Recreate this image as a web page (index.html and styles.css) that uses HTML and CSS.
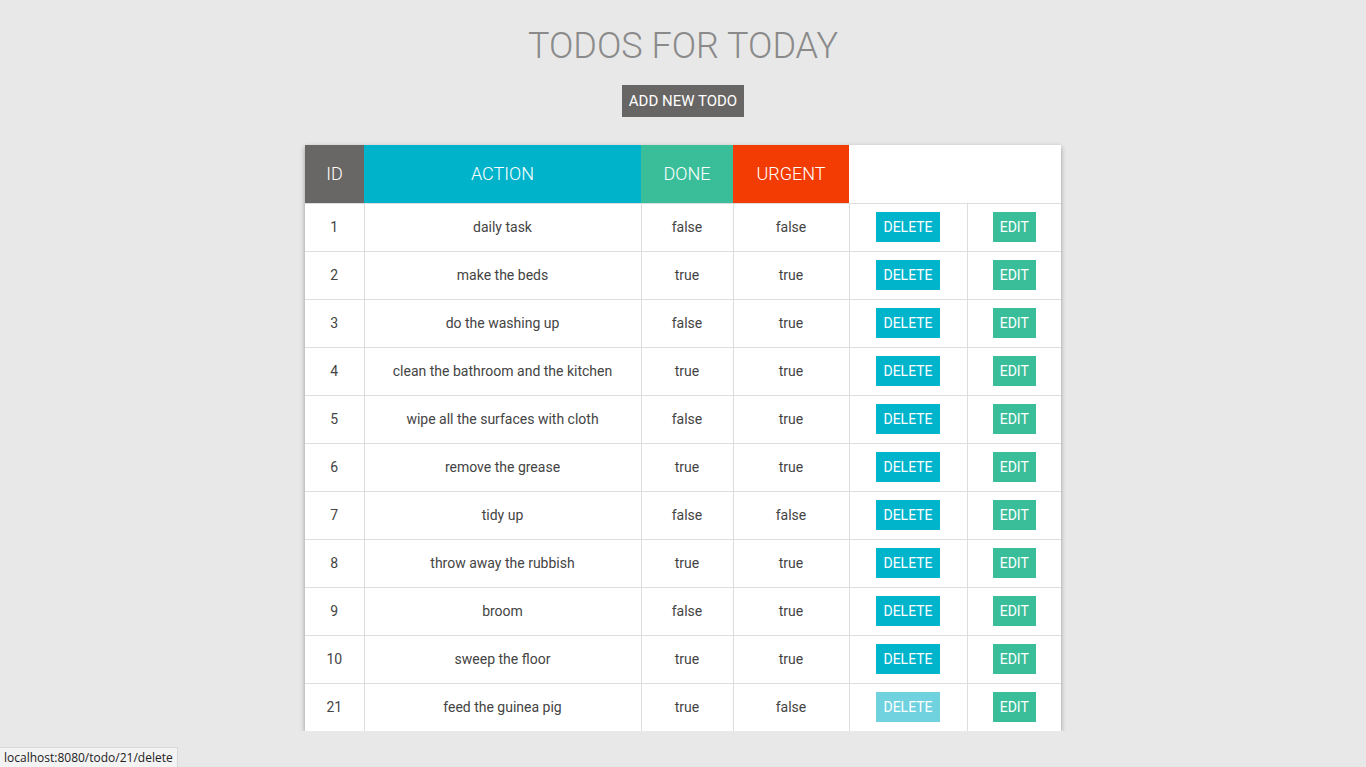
FILE: index.html
```html
<!DOCTYPE html>
<html>
<head>
<meta charset="utf-8">
<link rel="stylesheet" href="styles.css">
</head>
<body>
<div class="page">
  <h1 class="title">TODOS FOR TODAY</h1>
  <a class="add-btn" href="#">ADD NEW TODO</a>
  <table class="todos">
    <thead>
      <tr>
        <th class="h-id">ID</th>
        <th class="h-action">ACTION</th>
        <th class="h-done">DONE</th>
        <th class="h-urgent">URGENT</th>
        <th class="h-blank h-del"></th>
        <th class="h-blank h-edit"></th>
      </tr>
    </thead>
    <tbody>
      <tr><td>1</td><td>daily task</td><td>false</td><td>false</td><td><a class="btn del" href="#">DELETE</a></td><td><a class="btn edit" href="#">EDIT</a></td></tr>
      <tr><td>2</td><td>make the beds</td><td>true</td><td>true</td><td><a class="btn del" href="#">DELETE</a></td><td><a class="btn edit" href="#">EDIT</a></td></tr>
      <tr><td>3</td><td>do the washing up</td><td>false</td><td>true</td><td><a class="btn del" href="#">DELETE</a></td><td><a class="btn edit" href="#">EDIT</a></td></tr>
      <tr><td>4</td><td>clean the bathroom and the kitchen</td><td>true</td><td>true</td><td><a class="btn del" href="#">DELETE</a></td><td><a class="btn edit" href="#">EDIT</a></td></tr>
      <tr><td>5</td><td>wipe all the surfaces with cloth</td><td>false</td><td>true</td><td><a class="btn del" href="#">DELETE</a></td><td><a class="btn edit" href="#">EDIT</a></td></tr>
      <tr><td>6</td><td>remove the grease</td><td>true</td><td>true</td><td><a class="btn del" href="#">DELETE</a></td><td><a class="btn edit" href="#">EDIT</a></td></tr>
      <tr><td>7</td><td>tidy up</td><td>false</td><td>false</td><td><a class="btn del" href="#">DELETE</a></td><td><a class="btn edit" href="#">EDIT</a></td></tr>
      <tr><td>8</td><td>throw away the rubbish</td><td>true</td><td>true</td><td><a class="btn del" href="#">DELETE</a></td><td><a class="btn edit" href="#">EDIT</a></td></tr>
      <tr><td>9</td><td>broom</td><td>false</td><td>true</td><td><a class="btn del" href="#">DELETE</a></td><td><a class="btn edit" href="#">EDIT</a></td></tr>
      <tr><td>10</td><td>sweep the floor</td><td>true</td><td>true</td><td><a class="btn del" href="#">DELETE</a></td><td><a class="btn edit" href="#">EDIT</a></td></tr>
      <tr><td>21</td><td>feed the guinea pig</td><td>true</td><td>false</td><td><a class="btn del hover" href="#">DELETE</a></td><td><a class="btn edit" href="#">EDIT</a></td></tr>
    </tbody>
  </table>
</div>
<div class="status">localhost:8080/todo/21/delete</div>
</body>
</html>
```

FILE: styles.css
```css
html, body {
  margin: 0;
  padding: 0;
  background: #e8e8e8;
  font-family: Roboto, "Liberation Sans", sans-serif;
}
.page {
  display: flex;
  flex-direction: column;
  align-items: center;
  padding-top: 24px;
}
.title {
  margin: 0;
  font-size: 36px;
  font-weight: 300;
  color: #8a8a8a;
  line-height: 44px;
}
.add-btn {
  margin-top: 17px;
  display: block;
  background: #686664;
  color: #fff;
  text-decoration: none;
  font-size: 15px;
  line-height: 32px;
  height: 32px;
  padding: 0 7px;
}
.todos {
  margin-top: 28px;
  border-collapse: collapse;
  background: #fff;
  box-shadow: 0 2px 5px rgba(0,0,0,0.35);
  font-size: 14px;
  color: #444;
}
.todos th {
  height: 56px;
  padding: 0 0 2px;
  font-weight: 300;
  font-size: 18px;
  color: #fff;
  text-align: center;
  border-bottom: 1px solid #ddd;
}
.h-id { background: #696765; width: 59px; }
.h-action { background: #00b3cb; width: 277px; }
.h-done { background: #3abe9a; width: 92px; }
.h-urgent { background: #f23c04; width: 116px; }
.h-blank { background: #fff; }
.h-del { width: 118px; }
.h-edit { width: 94px; }
.todos td {
  height: 45px;
  padding: 0 0 2px;
  text-align: center;
  border: 1px solid #ddd;
}
.todos tr td:first-child { border-left: none; }
.todos tr td:last-child { border-right: none; }
.todos tbody tr:last-child td { border-bottom: none; }
.btn {
  display: inline-block;
  height: 30px;
  line-height: 30px;
  color: #fff;
  text-decoration: none;
  font-size: 14px;
  padding: 0 7px;
  vertical-align: middle;
}
.del { background: #00b4cc; }
.del.hover { background: #70d2df; }
.edit { background: #3abe9a; }
.status {
  position: fixed;
  left: 0;
  bottom: 0;
  height: 19px;
  line-height: 19px;
  padding: 0 4px;
  background: #f3f3f3;
  border-top: 1px solid #d8d8d8;
  border-right: 1px solid #d8d8d8;
  font-family: "Open Sans", "Liberation Sans", sans-serif;
  font-size: 12px;
  color: #222;
}
```
